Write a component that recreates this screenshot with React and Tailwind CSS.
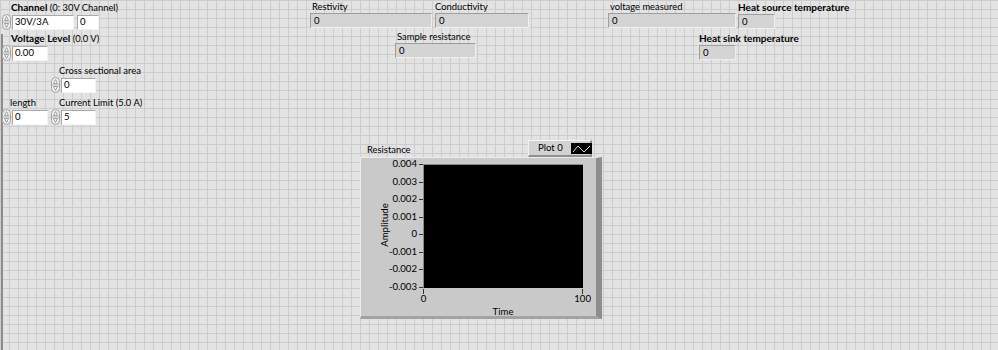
import React from 'react';

const font = { fontFamily: 'Lato, "Liberation Sans", Arial, sans-serif' };

function Arrows() {
  return (
    <svg width="9" height="16" viewBox="0 0 9 16" className="shrink-0">
      <rect x="0.5" y="0.5" width="8" height="15" rx="4" fill="#efefef" stroke="#a3a3a3" />
      <line x1="1" y1="8" x2="8" y2="8" stroke="#b5b5b5" />
      <path d="M2.5 6.5 L4.5 2.5 L6.5 6.5 Z" fill="#f7f7f7" stroke="#8c8c8c" strokeWidth="0.8" />
      <path d="M2.5 9.5 L4.5 13.5 L6.5 9.5 Z" fill="#f7f7f7" stroke="#8c8c8c" strokeWidth="0.8" />
    </svg>
  );
}

function WhiteBox({ className = '', children }) {
  return (
    <div
      className={
        'h-[15px] bg-white border-t border-l border-t-[#a9a9a9] border-l-[#a9a9a9] border-b border-r border-b-[#f4f4f4] border-r-[#f4f4f4] pl-[2px] flex items-center text-[9.6px] leading-none ' +
        className
      }
    >
      {children}
    </div>
  );
}

function GrayBox({ className = '', children }) {
  return (
    <div
      className={
        'h-[15px] bg-[#d4d4d4] border-t border-l border-t-[#9e9e9e] border-l-[#9e9e9e] border-b border-r border-b-[#efefef] border-r-[#efefef] pl-[3px] flex items-center text-[9.6px] leading-none ' +
        className
      }
    >
      {children}
    </div>
  );
}

function Label({ className = '', children }) {
  return <div className={'text-[9.4px] leading-[12px] whitespace-nowrap ' + className}>{children}</div>;
}

function Bold({ children }) {
  return <span className="font-bold text-[10px]">{children}</span>;
}

// numeric control: label above, inc/dec arrows + white box
function Numeric({ label, value, width, className = '' }) {
  return (
    <div className={'flex flex-col ' + className}>
      <Label className="pl-[8px]">{label}</Label>
      <div className="flex items-center gap-px">
        <Arrows />
        <WhiteBox className={width}>{value}</WhiteBox>
      </div>
    </div>
  );
}

// indicator: label above, sunken gray box
function Indicator({ label, width, pad = 'pl-[2px]', className = '' }) {
  return (
    <div className={'flex flex-col ' + className}>
      <Label className={pad}>{label}</Label>
      <GrayBox className={width}>0</GrayBox>
    </div>
  );
}

const yTicks = ['0.004', '0.003', '0.002', '0.001', '0', '-0.001', '-0.002', '-0.003'];

function Chart() {
  return (
    <div className="absolute left-[360px] top-[140px] flex flex-col">
      <div className="flex items-end justify-between">
        <Label className="pl-[7px] pb-[1px]">Resistance</Label>
        <div className="mr-[10px] w-[64px] h-[17px] bg-[#d2d2d2] border-t border-l border-t-[#f2f2f2] border-l-[#f2f2f2] border-b-2 border-r-2 border-b-[#8f8f8f] border-r-[#8f8f8f] flex items-center pl-[9px] gap-[8px]">
          <span className="text-[9.6px] leading-none whitespace-nowrap">Plot 0</span>
          <div className="w-[21px] h-[11px] bg-black">
            <svg width="21" height="11" viewBox="0 0 21 11" className="block">
              <polyline points="2,9 7,3 13,9 19,3" fill="none" stroke="#d9d9d9" strokeWidth="1" />
            </svg>
          </div>
        </div>
      </div>

      <div className="relative w-[242px] h-[162px] bg-[#c9c9c9] border-t border-l border-t-[#ececec] border-l-[#ececec] border-r-[6px] border-r-[#8d8d8d] border-b-[3px] border-b-[#a2a2a2]">
        <div className="absolute left-[24px] top-[67px] -translate-x-1/2 -translate-y-1/2 -rotate-90 text-[9.6px] leading-none whitespace-nowrap">
          Amplitude
        </div>
        <div className="flex pt-[6px]">
          <div className="relative w-[62px] h-[123px]">
            {yTicks.map((t, i) => (
              <React.Fragment key={t}>
                <div
                  className="absolute right-[6px] -translate-y-1/2 text-[9.6px] leading-none"
                  style={{ top: (i * 123) / 7 }}
                >
                  {t}
                </div>
                <div className="absolute right-0 w-[4px] h-px bg-[#333]" style={{ top: Math.round((i * 123) / 7) }} />
              </React.Fragment>
            ))}
          </div>
          <div className="w-[160px] h-[124px] bg-black border-t border-l border-[#8a8a8a]" />
        </div>
        <div className="ml-[62px] w-[160px] flex justify-between">
          <div className="w-px h-[5px] mt-px bg-[#333]" />
          <div className="w-px h-[5px] mt-px bg-[#333]" />
        </div>
        <div className="ml-[58px] w-[172px] flex justify-between text-[9.6px] leading-none">
          <span className="w-[9px] text-center">0</span>
          <span>100</span>
        </div>
        <div className="ml-[62px] mt-[3px] w-[160px] text-center text-[9.6px] leading-none">Time</div>
      </div>
    </div>
  );
}

export default function App() {
  return (
    <div
      style={font}
      className="relative w-[998px] h-[350px] overflow-hidden bg-[#e3e3e3] bg-[linear-gradient(to_right,#cdcdcd_1px,transparent_1px),linear-gradient(to_bottom,#cdcdcd_1px,transparent_1px)] bg-size-[9px_9px] text-black"
    >
      <div className="absolute left-px top-[34px] bottom-0 w-[2px] bg-[#8c8c8c]" />

      {/* left controls */}
      <div className="absolute left-[2px] top-px flex flex-col">
        <div className="flex flex-col">
          <Label className="pl-[9px]">
            <Bold>Channel</Bold> (0: 30V Channel)
          </Label>
          <div className="flex items-center gap-px">
            <Arrows />
            <WhiteBox className="w-[62px]">30V/3A</WhiteBox>
            <WhiteBox className="w-[22px] ml-[2px]">0</WhiteBox>
          </div>
        </div>

        <div className="mt-[2px] flex flex-col">
          <Label className="pl-[9px]">
            <Bold>Voltage Level</Bold> (0.0 V)
          </Label>
          <div className="flex items-center gap-px">
            <Arrows />
            <WhiteBox className="w-[36px]">0.00</WhiteBox>
          </div>
        </div>

        <div className="mt-[4px] flex items-end gap-px">
          <Numeric className="w-[48px]" label="length" value="0" width="w-[36px]" />
          <div className="flex flex-col gap-[4px]">
            <Numeric label="Cross sectional area" value="0" width="w-[35px]" />
            <Numeric label="Current Limit (5.0 A)" value="5" width="w-[35px]" />
          </div>
        </div>
      </div>

      {/* indicators */}
      <div className="absolute left-[310px] top-px flex flex-col items-start">
        <div className="flex gap-[3px]">
          <Indicator label="Restivity" width="w-[122px]" />
          <Indicator label="Conductivity" width="w-[94px]" pad="pl-0" />
        </div>
        <Indicator label="Sample resistance" width="w-[81px]" className="ml-[85px] mt-[3px]" />
      </div>

      <div className="absolute left-[608px] top-px flex flex-col items-start">
        <div className="flex gap-[2px]">
          <Indicator label="voltage measured" width="w-[128px]" />
          <Indicator label={<Bold>Heat source temperature</Bold>} width="w-[37px]" pad="pl-0" />
        </div>
        <Indicator label={<Bold>Heat sink temperature</Bold>} width="w-[37px]" pad="pl-0" className="ml-[91px] mt-[3px]" />
      </div>

      <Chart />
    </div>
  );
}
